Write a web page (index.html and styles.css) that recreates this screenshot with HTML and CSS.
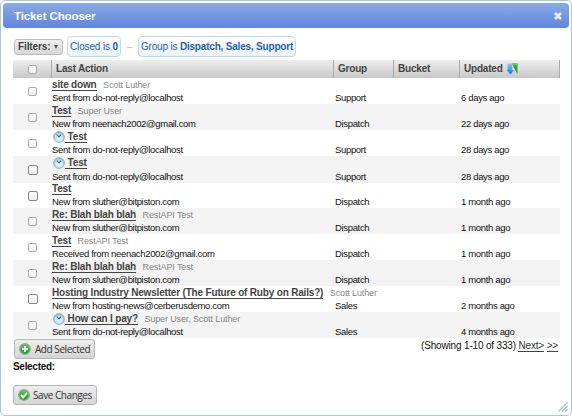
FILE: index.html
```html
<!DOCTYPE html>
<html lang="en">
<head>
<meta charset="utf-8">
<title>Ticket Chooser</title>
<link rel="stylesheet" href="styles.css">
</head>
<body>
<svg width="0" height="0" class="defs">
  <defs>
    <radialGradient id="face" cx=".5" cy=".6" r=".55"><stop offset="0" stop-color="#e6fbff"/><stop offset=".65" stop-color="#b9e5f6"/><stop offset="1" stop-color="#8db4cc"/></radialGradient>
    <linearGradient id="green" x1="0" y1="0" x2="0" y2="1"><stop offset="0" stop-color="#5cc95c"/><stop offset="1" stop-color="#12a01c"/></linearGradient>
    <linearGradient id="blue" x1="0" y1="0" x2="0" y2="1"><stop offset="0" stop-color="#8cc4fa"/><stop offset="1" stop-color="#1c74e0"/></linearGradient>
    <symbol id="clock" viewBox="0 0 12 12"><circle cx="6" cy="6" r="5.4" fill="url(#face)" stroke="#98abb7" stroke-width=".9"/><path d="M3.9 3.5L6 6l2-2.3" fill="none" stroke="#315a73" stroke-width="1.1"/></symbol>
  </defs>
</svg>
<main class="dialog">
  <header class="titlebar"><h1>Ticket Chooser</h1>
    <svg class="close" viewBox="0 0 8 8"><path d="M1 1l6 6M7 1L1 7" stroke="#e6eefc" stroke-width="2.5"/></svg>
  </header>
  <section class="filters">
    <button class="filter-btn">Filters: <i></i></button>
    <span class="chip closed">Closed is <b>0</b></span>
    <span class="dash">–</span>
    <span class="chip">Group is <b>Dispatch, Sales, Support</b></span>
  </section>
  <section class="list">
    <div class="head">
      <span class="pick"><i class="box"></i></span><span>Last Action</span><span>Group</span><span>Bucket</span>
      <span>Updated <svg class="sort" viewBox="0 0 12 12"><path d="M1.6.5h4.6V7H8L4.5 11.5.4 7h1.2z" fill="url(#blue)"/><path d="M6.2.5H11.5v10.8L9.4 7.2 7.7 4.6z" fill="#27a338"/><path d="M6.2.5H11.5v2H7z" fill="#65c565"/></svg></span>
    </div>
    <div class="row"><span class="pick"><i class="box"></i></span><div><p class="subject"><a>site down</a><em>Scott Luther</em></p><p class="from">Sent from do-not-reply@localhost</p></div><span class="cell">Support</span><span class="cell"></span><span class="cell">6 days ago</span></div>
    <div class="row"><span class="pick"><i class="box"></i></span><div><p class="subject"><a>Test</a><em>Super User</em></p><p class="from">New from neenach2002@gmail.com</p></div><span class="cell">Dispatch</span><span class="cell"></span><span class="cell">22 days ago</span></div>
    <div class="row"><span class="pick"><i class="box"></i></span><div><p class="subject"><svg class="clock"><use href="#clock"/></svg><a>&nbsp;Test</a></p><p class="from">Sent from do-not-reply@localhost</p></div><span class="cell">Support</span><span class="cell"></span><span class="cell">28 days ago</span></div>
    <div class="row tall"><span class="pick"><i class="box big"></i></span><div><p class="subject"><svg class="clock"><use href="#clock"/></svg><a>&nbsp;Test</a></p><p class="from">Sent from do-not-reply@localhost</p></div><span class="cell">Support</span><span class="cell"></span><span class="cell">28 days ago</span></div>
    <div class="row short"><span class="pick"><i class="box big"></i></span><div><p class="subject"><a>Test</a></p><p class="from">New from sluther@bitpiston.com</p></div><span class="cell">Dispatch</span><span class="cell"></span><span class="cell">1 month ago</span></div>
    <div class="row"><span class="pick"><i class="box"></i></span><div><p class="subject"><a>Re: Blah blah blah</a><em>RestAPI Test</em></p><p class="from">New from sluther@bitpiston.com</p></div><span class="cell">Dispatch</span><span class="cell"></span><span class="cell">1 month ago</span></div>
    <div class="row"><span class="pick"><i class="box"></i></span><div><p class="subject"><a>Test</a><em>RestAPI Test</em></p><p class="from">Received from neenach2002@gmail.com</p></div><span class="cell">Dispatch</span><span class="cell"></span><span class="cell">1 month ago</span></div>
    <div class="row"><span class="pick"><i class="box"></i></span><div><p class="subject"><a>Re: Blah blah blah</a><em>RestAPI Test</em></p><p class="from">New from sluther@bitpiston.com</p></div><span class="cell">Dispatch</span><span class="cell"></span><span class="cell">1 month ago</span></div>
    <div class="row"><span class="pick"><i class="box big"></i></span><div><p class="subject"><a>Hosting Industry Newsletter (The Future of Ruby on Rails?)</a><em>Scott Luther</em></p><p class="from">New from hosting-news@cerberusdemo.com</p></div><span class="cell">Sales</span><span class="cell"></span><span class="cell">2 months ago</span></div>
    <div class="row"><span class="pick"><i class="box"></i></span><div><p class="subject"><svg class="clock"><use href="#clock"/></svg><a>&nbsp;How can I pay?</a><em>Super User, Scott Luther</em></p><p class="from">Sent from do-not-reply@localhost</p></div><span class="cell">Sales</span><span class="cell"></span><span class="cell">4 months ago</span></div>
  </section>
  <section class="below">
    <button class="action add"><svg viewBox="0 0 12 12"><circle cx="6" cy="6" r="5.3" fill="url(#green)" stroke="#8fa893" stroke-width="1.2"/><path d="M6 3v6M3 6h6" stroke="#fff" stroke-width="1.8"/></svg><span>Add Selected</span></button>
    <div class="pager">(Showing 1-10 of 333) <a>Next&gt;</a> <a>&gt;&gt;</a></div>
  </section>
  <div class="selected">Selected:</div>
  <button class="action save"><svg viewBox="0 0 12 12"><circle cx="6" cy="6" r="5.3" fill="url(#green)" stroke="#8fa893" stroke-width="1.2"/><path d="M3 6l2.2 2.3L9 4" fill="none" stroke="#fff" stroke-width="1.9"/></svg><span>Save Changes</span></button>
  <svg class="grip" viewBox="0 0 10 10"><path d="M.5 9.5l9-9M4 9.5L9.5 4M7.2 9.5l2.3-2.3" stroke="#9cc3e3" stroke-width="1.3"/></svg>
</main>
</body>
</html>
```

FILE: styles.css
```css
* { box-sizing: border-box; }
body { margin: 0; background: #fff; font-family: "Liberation Sans", Arial, sans-serif; color: #111; overflow: hidden; }
h1, p { margin: 0; }
.defs { position: absolute; }
.dialog { position: relative; width: 572px; height: 416px; border: 1px solid #a6c9e2; border-radius: 5px; padding: 2px; background: #fff; }
.titlebar { height: 25px; border-radius: 4px; background: linear-gradient(#8baae5, #6085dd); display: flex; align-items: center; justify-content: space-between; padding: 1px 7px 0 11px; }
h1 { font-size: 11.5px; line-height: 25px; color: #fff; letter-spacing: -.11px; }
.close { width: 8px; height: 8px; }
.filters { display: flex; align-items: center; margin: 8px 0 0 11px; height: 21px; font-size: 10px; letter-spacing: -.18px; }
.filter-btn { width: 49px; height: 16px; padding: 0 0 0 3px; border: 1px solid #bdbdbd; border-radius: 3px; background: linear-gradient(#eee, #d8d8d8); font: bold 10px/14px "Liberation Sans", sans-serif; letter-spacing: -.1px; color: #444; display: flex; align-items: center; }
.filter-btn i { margin-left: 3px; border: 2px solid transparent; border-top: 4px solid #555; border-bottom: 0; }
.chip { height: 21px; line-height: 20px; padding: 0 2px; border: 1px solid #bfd9ed; border-radius: 4px; background: linear-gradient(#fff, #e8f3fc); color: #2b62ab; white-space: nowrap; width: 158px; letter-spacing: -.19px; }
.closed { margin-left: 4px; width: 54px; letter-spacing: -.14px; }
.dash { color: #a6c9e2; width: 17px; text-align: center; }
.list { width: 547px; margin: 3px 0 0 10px; }
.head, .row { display: grid; grid-template-columns: 38px 282px 60px 66px 101px; }
.head { height: 18px; background: linear-gradient(#eee, #c8c8c8); color: #444; font: bold 10px/18px "Liberation Sans", sans-serif; letter-spacing: -.2px; }
.head > span { border-right: 1px solid #aaa; padding-left: 5px; margin-right: -1px; white-space: nowrap; display: flex; align-items: center; }
.head > span:last-child { margin-right: 0; }
.head .pick, .pick { padding-left: 15px; }
.sort { width: 12px; height: 12px; margin-left: 3px; }
.row { height: 26px; }
.row:nth-child(odd) { background: #f3f3f3; }
.pick { display: flex; align-items: center; }
.box { width: 9px; height: 9px; border: 1px solid #aaa; border-radius: 2px; background: linear-gradient(#fff, #eee); }
.big { width: 10px; height: 10px; border-color: #888; }
.subject { height: 13px; display: flex; align-items: center; margin-left: 1px; font-size: 10px; line-height: 12px; letter-spacing: -.18px; white-space: nowrap; }
.subject a { font-weight: bold; color: #444; height: 12px; border-bottom: 1px solid #444; }
.subject em { font-style: normal; font-size: 9px; letter-spacing: -.12px; color: #888; margin-left: 6.5px; }
.from, .cell { font-size: 9.5px; line-height: 13px; letter-spacing: -.34px; white-space: nowrap; }
.from { margin-left: 1px; }
.cell { align-self: end; margin-left: 2px; }
.tall { height: 27px; }
.tall .subject { height: 14px; }
.short { height: 25px; }
.short .subject { height: 12px; }
.clock { width: 12px; height: 12px; flex: none; margin-left: 1px; }
.below { display: flex; justify-content: space-between; padding: 1px 11px 0 11px; }
.action { height: 20px; border: 1px solid #b4b4b4; border-radius: 3px; background: linear-gradient(#eee, #d4d4d4); padding: 0 4px; display: flex; align-items: center; gap: 3px; font: 10px "Open Sans", sans-serif; letter-spacing: -.45px; color: #333; white-space: nowrap; }
.action svg { width: 12px; height: 12px; flex: none; }
.add { width: 81px; gap: 4px; }
.save { width: 84px; margin: 11px 0 0 10px; }
.pager { font-size: 10px; line-height: 12px; letter-spacing: -.17px; padding-top: 1px; }
.pager a { display: inline-block; height: 12px; border-bottom: 1px solid #444; color: #333; }
.selected { margin: 1px 0 0 10px; font: bold 10px/14px "Liberation Sans", sans-serif; letter-spacing: -.3px; }
.grip { position: absolute; right: 3px; bottom: 3px; width: 10px; height: 10px; }
```
